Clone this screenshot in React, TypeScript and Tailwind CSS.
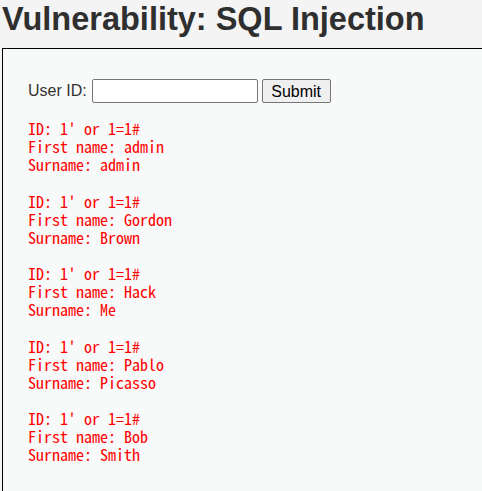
export default function App() {
  const rows = [
    { first: "admin", last: "admin" },
    { first: "Gordon", last: "Brown" },
    { first: "Hack", last: "Me" },
    { first: "Pablo", last: "Picasso" },
    { first: "Bob", last: "Smith" },
  ];

  return (
    <div className="min-h-[491px] bg-[#f4f4f4] pl-[2px] font-['Liberation_Sans',Arial,sans-serif] text-[#333]">
      <h1 className="pt-[1px] text-[32.5px] font-bold leading-[36px] text-[#2f2f2f]">
        Vulnerability: SQL Injection
      </h1>
      <div className="mt-[11px] min-h-[450px] border-l border-t border-black bg-[#f8f9f9] pl-[25px] pt-[30px]">
        <form className="flex items-center">
          <label className="text-[16px] text-[#333]">User ID:</label>
          <input
            type="text"
            className="ml-[5px] h-[24px] w-[166px] rounded-[2px] border border-[#767676] bg-white"
          />
          <button
            type="button"
            className="ml-[4px] h-[24px] w-[69px] rounded-[2px] border border-[#767676] bg-[#efefef] text-[16px] text-black"
          >
            Submit
          </button>
        </form>
        <div className="mt-[16px] font-['Noto_Sans_Mono_CJK_JP','Liberation_Mono',monospace] text-[16px] leading-[18px] text-[#ff0000]">
          {rows.map((r) => (
            <div key={r.first} className="mb-[18.5px] whitespace-pre">
              <div>{"ID: 1' or 1=1#"}</div>
              <div>{"First name: " + r.first}</div>
              <div>{"Surname: " + r.last}</div>
            </div>
          ))}
        </div>
      </div>
    </div>
  );
}
